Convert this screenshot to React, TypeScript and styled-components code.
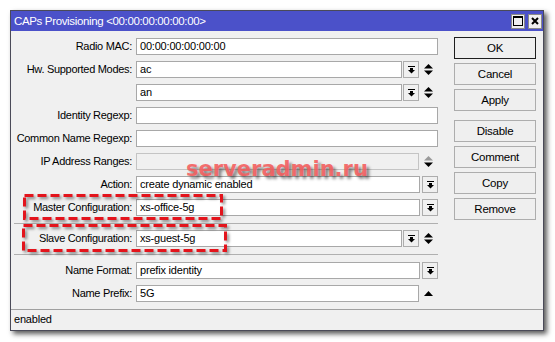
import React from "react";
import styled, { createGlobalStyle } from "styled-components";

const GlobalStyle = createGlobalStyle`
  html, body {
    margin: 0;
    padding: 0;
    background: #fff;
  }
  body {
    font-family: "Liberation Sans", Arial, sans-serif;
    color: #000;
  }
`;

const Page = styled.div`
  position: relative;
  width: 555px;
  height: 342px;
  padding: 10px 0 0 10px;
  box-sizing: border-box;
  overflow: hidden;
`;

const Window = styled.div`
  width: 534px;
  height: 321px;
  box-sizing: border-box;
  border: 1px solid #4a4a58;
  background: #f0f0f0;
  box-shadow: 3px 3px 5px rgba(0, 0, 0, 0.65);
  display: flex;
  flex-direction: column;
`;

const TitleBar = styled.div`
  height: 20px;
  flex: none;
  background: #4b51c9;
  color: #fff;
  display: flex;
  align-items: center;
  padding: 0 1px 0 3px;
  font-size: 11.5px;
  letter-spacing: -0.35px;
`;

const TitleText = styled.div`
  flex: 1;
  white-space: nowrap;
`;

const TitleButtons = styled.div`
  display: flex;
  gap: 3px;
`;

const TitleButton = styled.div`
  width: 14px;
  height: 15px;
  box-sizing: border-box;
  background: #f0f0f0;
  border: 1px solid #8a8a8a;
  display: flex;
  align-items: center;
  justify-content: center;
`;

const Body = styled.div`
  flex: 1;
  display: flex;
  min-height: 0;
`;

const Form = styled.div`
  width: 427px;
  padding: 7px 0 7px 0;
  display: flex;
  flex-direction: column;
  gap: 6px;
`;

const Row = styled.div`
  display: grid;
  grid-template-columns: 121px 1fr;
  column-gap: 4px;
  height: 17px;
`;

const Label = styled.div`
  text-align: right;
  font-size: 11px;
  letter-spacing: -0.3px;
  line-height: 17px;
  white-space: nowrap;
`;

const FieldLine = styled.div`
  display: flex;
  align-items: stretch;
`;

const Field = styled.div<{ $disabled?: boolean }>`
  flex: 1;
  box-sizing: border-box;
  height: 17px;
  border: 1px solid ${(p) => (p.$disabled ? "#c4c4c4" : "#a8a8a8")};
  background: ${(p) => (p.$disabled ? "#f0f0f0" : "#fff")};
  padding: 0 3px;
  font-size: 11px;
  letter-spacing: -0.2px;
  line-height: 15px;
  white-space: nowrap;
  overflow: hidden;
`;

const DropButton = styled.div<{ $gap: number }>`
  width: 16px;
  height: 17px;
  box-sizing: border-box;
  margin-left: ${(p) => p.$gap}px;
  background: #f0f0f0;
  border: 1px solid #adadad;
  display: flex;
  align-items: center;
  justify-content: center;
`;

const ArrowSlot = styled.div`
  width: 19px;
  display: flex;
  align-items: center;
  justify-content: center;
`;

const Separator = styled.div<{ $after: number }>`
  height: 1px;
  background: #b0b0b0;
  margin: 1px 0 ${(p) => p.$after}px 3px;
`;

const ButtonColumn = styled.div`
  margin-left: 16px;
  width: 82px;
  padding-top: 6px;
  display: flex;
  flex-direction: column;
  gap: 4px;
`;

const ActionButton = styled.div<{ $default?: boolean; $spaced?: boolean }>`
  height: 22px;
  box-sizing: border-box;
  border: 1px solid ${(p) => (p.$default ? "#1e1e1e" : "#adadad")};
  background: #efefef;
  margin-top: ${(p) => (p.$spaced ? 5 : 0)}px;
  display: flex;
  align-items: center;
  justify-content: center;
  font-size: 11.5px;
  letter-spacing: -0.25px;
`;

const StatusBar = styled.div`
  height: 20px;
  flex: none;
  border-top: 1px solid #a0a0a0;
  padding-left: 3px;
  font-size: 11px;
  letter-spacing: -0.2px;
  line-height: 19px;
`;

const Highlight = styled.svg`
  position: absolute;
  overflow: visible;
  filter: drop-shadow(2px 2px 1.5px rgba(0, 0, 0, 0.45));
`;

const Watermark = styled.div`
  position: absolute;
  left: 186px;
  top: 157px;
  font-family: "DejaVu Sans", "Liberation Sans", sans-serif;
  font-weight: bold;
  font-size: 21px;
  line-height: 24px;
  color: rgba(244, 92, 92, 0.88);
  text-shadow: 3px 3px 3px rgba(0, 0, 0, 0.45);
  pointer-events: none;
  white-space: nowrap;
`;

const DropIcon = () => (
  <svg width="7" height="8" viewBox="0 0 7 8">
    <rect x="0" y="0" width="7" height="1" fill="#000" />
    <rect x="2" y="2" width="3" height="2" fill="#000" />
    <polygon points="0,4 7,4 3.5,7.6" fill="#000" />
  </svg>
);

const UpDownIcon = ({ dimTop }: { dimTop?: boolean }) => (
  <svg width="9" height="11" viewBox="0 0 9 11">
    <polygon points="4.5,0 9,4.5 0,4.5" fill={dimTop ? "#9a9a9a" : "#000"} />
    <polygon points="0,6.5 9,6.5 4.5,11" fill="#000" />
  </svg>
);

const UpIcon = () => (
  <svg width="9" height="5" viewBox="0 0 9 5">
    <polygon points="4.5,0 9,5 0,5" fill="#000" />
  </svg>
);

type Extra = "none" | "drop" | "dropEnd" | "updown" | "updownDim" | "up";

interface FieldRowProps {
  label?: string;
  value?: string;
  disabled?: boolean;
  extra?: Extra;
}

function FieldRow({ label = "", value = "", disabled, extra = "none" }: FieldRowProps) {
  const hasDrop = extra === "drop" || extra === "dropEnd";
  const hasSlot = extra === "drop" || extra === "updown" || extra === "updownDim" || extra === "up";
  return (
    <Row>
      <Label>{label}</Label>
      <FieldLine>
        <Field $disabled={disabled}>{value}</Field>
        {hasDrop && (
          <DropButton $gap={extra === "dropEnd" ? 2 : 1}>
            <DropIcon />
          </DropButton>
        )}
        {hasSlot && (
          <ArrowSlot>
            {extra === "up" ? <UpIcon /> : <UpDownIcon dimTop={extra === "updownDim"} />}
          </ArrowSlot>
        )}
      </FieldLine>
    </Row>
  );
}

export default function App() {
  return (
    <>
      <GlobalStyle />
      <Page>
        <Window>
          <TitleBar>
            <TitleText>CAPs Provisioning &lt;00:00:00:00:00:00&gt;</TitleText>
            <TitleButtons>
              <TitleButton>
                <svg width="10" height="10" viewBox="0 0 10 10">
                  <rect x="0.5" y="0.5" width="9" height="9" fill="none" stroke="#000" />
                  <rect x="0" y="0" width="10" height="2" fill="#000" />
                </svg>
              </TitleButton>
              <TitleButton>
                <svg width="8" height="8" viewBox="0 0 8 8">
                  <path d="M1 1 L7 7 M7 1 L1 7" stroke="#000" strokeWidth="2" />
                </svg>
              </TitleButton>
            </TitleButtons>
          </TitleBar>
          <Body>
            <Form>
              <FieldRow label="Radio MAC:" value="00:00:00:00:00:00" />
              <FieldRow label="Hw. Supported Modes:" value="ac" extra="drop" />
              <FieldRow value="an" extra="drop" />
              <FieldRow label="Identity Regexp:" />
              <FieldRow label="Common Name Regexp:" />
              <FieldRow label="IP Address Ranges:" disabled extra="updownDim" />
              <FieldRow label="Action:" value="create dynamic enabled" extra="dropEnd" />
              <FieldRow label="Master Configuration:" value="xs-office-5g" extra="dropEnd" />
              <Separator $after={0} />
              <FieldRow label="Slave Configuration:" value="xs-guest-5g" extra="drop" />
              <Separator $after={1} />
              <FieldRow label="Name Format:" value="prefix identity" extra="dropEnd" />
              <FieldRow label="Name Prefix:" value="5G" extra="up" />
            </Form>
            <ButtonColumn>
              <ActionButton $default>OK</ActionButton>
              <ActionButton>Cancel</ActionButton>
              <ActionButton>Apply</ActionButton>
              <ActionButton $spaced>Disable</ActionButton>
              <ActionButton>Comment</ActionButton>
              <ActionButton>Copy</ActionButton>
              <ActionButton>Remove</ActionButton>
            </ButtonColumn>
          </Body>
          <StatusBar>enabled</StatusBar>
        </Window>

        <Watermark>serveradmin.ru</Watermark>

        <Highlight style={{ left: 23, top: 194 }} width="200" height="26" viewBox="0 0 200 26">
          <rect x="1.5" y="1.5" width="197" height="23" fill="none" stroke="#e3141c" strokeWidth="3" strokeDasharray="9 4" />
        </Highlight>
        <Highlight style={{ left: 22, top: 224 }} width="205" height="28" viewBox="0 0 205 28">
          <rect x="1.5" y="1.5" width="202" height="25" fill="none" stroke="#e3141c" strokeWidth="3" strokeDasharray="9 4" />
        </Highlight>
      </Page>
    </>
  );
}
